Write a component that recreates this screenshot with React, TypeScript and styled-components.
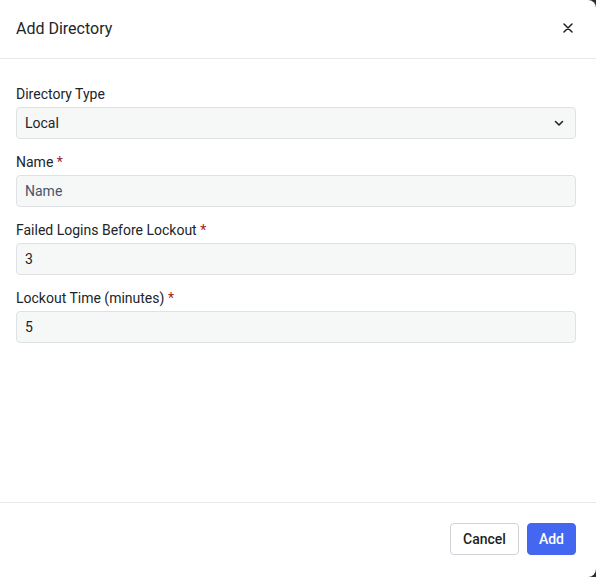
import React from "react";
import styled, { createGlobalStyle } from "styled-components";

const GlobalStyle = createGlobalStyle`
  html, body {
    margin: 0;
    padding: 0;
    background: #2b2b2b;
  }
  body {
    font-family: Roboto, "Liberation Sans", sans-serif;
  }
  * {
    box-sizing: border-box;
  }
`;

const Dialog = styled.div`
  width: 596px;
  height: 577px;
  background: #fff;
  border-radius: 0 8px 8px 0;
  display: flex;
  flex-direction: column;
  overflow: hidden;
`;

const Header = styled.div`
  height: 59px;
  flex-shrink: 0;
  display: flex;
  align-items: center;
  justify-content: space-between;
  padding: 0 20px 2px 16px;
  border-bottom: 1px solid #e6e8ea;
`;

const Title = styled.h2`
  margin: 0;
  font-size: 16px;
  font-weight: 400;
  color: #212529;
`;

const CloseButton = styled.button`
  border: none;
  background: none;
  padding: 0;
  width: 16px;
  height: 16px;
  display: flex;
  align-items: center;
  justify-content: center;
  color: #1d1f24;
  cursor: pointer;
`;

const Body = styled.div`
  flex: 1;
  padding: 25px 20px 0 16px;
  display: flex;
  flex-direction: column;
  gap: 13px;
`;

const Field = styled.div`
  display: flex;
  flex-direction: column;
  gap: 3px;
`;

const Label = styled.label`
  font-size: 14px;
  line-height: 20px;
  color: #212529;
`;

const Required = styled.span`
  color: #a61d24;
`;

const InputBox = styled.div<{ placeholder?: boolean }>`
  height: 32px;
  display: flex;
  align-items: center;
  justify-content: space-between;
  padding: 0 10px 1px 8px;
  background: #f6f7f7;
  border: 1px solid #dfe2e5;
  border-radius: 4px;
  font-size: 14px;
  color: ${(p) => (p.placeholder ? "#46556b" : "#212529")};
`;

const Footer = styled.div`
  height: 75px;
  flex-shrink: 0;
  border-top: 1px solid #e6e8ea;
  display: flex;
  justify-content: flex-end;
  align-items: flex-start;
  gap: 8px;
  padding: 20px 20px 0;
`;

const Button = styled.button<{ primary?: boolean }>`
  height: 32px;
  padding: 0 ${(p) => (p.primary ? "11px" : "12px")};
  border-radius: 4px;
  font-family: Roboto, "Liberation Sans", sans-serif;
  font-size: 14px;
  font-weight: 500;
  cursor: pointer;
  border: 1px solid ${(p) => (p.primary ? "#4467f1" : "#cfd3d7")};
  background: ${(p) => (p.primary ? "#4467f1" : "#fff")};
  color: ${(p) => (p.primary ? "#fff" : "#1d1f24")};
`;

const Chevron = () => (
  <svg width="12" height="12" viewBox="0 0 12 12" fill="none">
    <path d="M2.5 4.5L6 8l3.5-3.5" stroke="#212529" strokeWidth="1.6" strokeLinecap="round" strokeLinejoin="round" />
  </svg>
);

const fields = [
  { label: "Name", value: "Name", placeholder: true },
  { label: "Failed Logins Before Lockout", value: "3" },
  { label: "Lockout Time (minutes)", value: "5" },
];

export default function App() {
  return (
    <>
      <GlobalStyle />
      <Dialog>
        <Header>
          <Title>Add Directory</Title>
          <CloseButton aria-label="Close">
            <svg width="10" height="10" viewBox="0 0 10 10">
              <path d="M1 1l8 8M9 1l-8 8" stroke="currentColor" strokeWidth="1.5" strokeLinecap="round" />
            </svg>
          </CloseButton>
        </Header>
        <Body>
          <Field>
            <Label>Directory Type</Label>
            <InputBox>
              <span>Local</span>
              <Chevron />
            </InputBox>
          </Field>
          {fields.map((f) => (
            <Field key={f.label}>
              <Label>
                {f.label} <Required>*</Required>
              </Label>
              <InputBox placeholder={f.placeholder}>{f.value}</InputBox>
            </Field>
          ))}
        </Body>
        <Footer>
          <Button>Cancel</Button>
          <Button primary>Add</Button>
        </Footer>
      </Dialog>
    </>
  );
}
